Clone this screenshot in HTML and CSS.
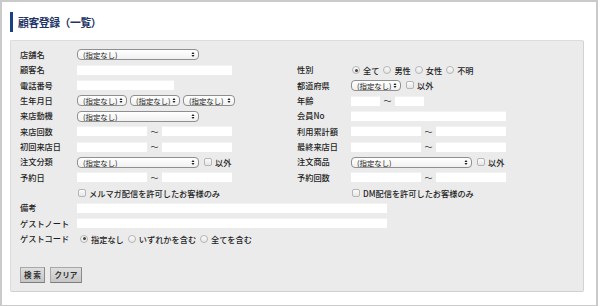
FILE: index.html
```html
<!DOCTYPE html>
<html lang="ja">
<head>
<meta charset="utf-8">
<title>顧客登録（一覧）</title>
<link rel="stylesheet" href="styles.css">
</head>
<body>
<div class="frame">
  <h1 class="title">顧客登録（一覧）</h1>
  <div class="panel">
    <div class="grid">
      <div class="lbl">店舗名</div>
      <div class="fld"><span class="sel w122"><span class="st">(指定なし)</span><svg class="arr" viewBox="0 0 5 8"><path d="M0.6 3.3L2.5 0.8L4.4 3.3Z M0.6 4.7L2.5 7.2L4.4 4.7Z"/></svg></span></div>
      <div class="lbl"></div>
      <div class="fld"></div>

      <div class="lbl">顧客名</div>
      <div class="fld"><span class="inp w155"></span></div>
      <div class="lbl">性別</div>
      <div class="fld"><span class="rad on"></span><span class="opt">全て</span><span class="rad"></span><span class="opt">男性</span><span class="rad"></span><span class="opt">女性</span><span class="rad"></span><span class="opt">不明</span></div>

      <div class="lbl">電話番号</div>
      <div class="fld"><span class="inp w97"></span></div>
      <div class="lbl">都道府県</div>
      <div class="fld"><span class="sel w50"><span class="st">(指定なし)</span><svg class="arr" viewBox="0 0 5 8"><path d="M0.6 3.3L2.5 0.8L4.4 3.3Z M0.6 4.7L2.5 7.2L4.4 4.7Z"/></svg></span><span class="chk"></span><span class="opt">以外</span></div>

      <div class="lbl">生年月日</div>
      <div class="fld"><span class="sel w50 mr3"><span class="st">(指定なし)</span><svg class="arr" viewBox="0 0 5 8"><path d="M0.6 3.3L2.5 0.8L4.4 3.3Z M0.6 4.7L2.5 7.2L4.4 4.7Z"/></svg></span><span class="sel w50 mr3"><span class="st">(指定なし)</span><svg class="arr" viewBox="0 0 5 8"><path d="M0.6 3.3L2.5 0.8L4.4 3.3Z M0.6 4.7L2.5 7.2L4.4 4.7Z"/></svg></span><span class="sel w52"><span class="st">(指定なし)</span><svg class="arr" viewBox="0 0 5 8"><path d="M0.6 3.3L2.5 0.8L4.4 3.3Z M0.6 4.7L2.5 7.2L4.4 4.7Z"/></svg></span></div>
      <div class="lbl">年齢</div>
      <div class="fld"><span class="inp w29"></span><span class="tilde">〜</span><span class="inp w29"></span></div>

      <div class="lbl">来店動機</div>
      <div class="fld"><span class="sel w122"><span class="st">(指定なし)</span><svg class="arr" viewBox="0 0 5 8"><path d="M0.6 3.3L2.5 0.8L4.4 3.3Z M0.6 4.7L2.5 7.2L4.4 4.7Z"/></svg></span></div>
      <div class="lbl">会員No</div>
      <div class="fld"><span class="inp w155"></span></div>

      <div class="lbl">来店回数</div>
      <div class="fld"><span class="inp w70"></span><span class="tilde">〜</span><span class="inp w70"></span></div>
      <div class="lbl">利用累計額</div>
      <div class="fld"><span class="inp w70"></span><span class="tilde">〜</span><span class="inp w70"></span></div>

      <div class="lbl">初回来店日</div>
      <div class="fld"><span class="inp w70"></span><span class="tilde">〜</span><span class="inp w70"></span></div>
      <div class="lbl">最終来店日</div>
      <div class="fld"><span class="inp w70"></span><span class="tilde">〜</span><span class="inp w70"></span></div>

      <div class="lbl">注文分類</div>
      <div class="fld"><span class="sel w122"><span class="st">(指定なし)</span><svg class="arr" viewBox="0 0 5 8"><path d="M0.6 3.3L2.5 0.8L4.4 3.3Z M0.6 4.7L2.5 7.2L4.4 4.7Z"/></svg></span><span class="chk"></span><span class="opt">以外</span></div>
      <div class="lbl">注文商品</div>
      <div class="fld"><span class="sel w121"><span class="st">(指定なし)</span><svg class="arr" viewBox="0 0 5 8"><path d="M0.6 3.3L2.5 0.8L4.4 3.3Z M0.6 4.7L2.5 7.2L4.4 4.7Z"/></svg></span><span class="chk"></span><span class="opt">以外</span></div>

      <div class="lbl">予約日</div>
      <div class="fld"><span class="inp w70"></span><span class="tilde">〜</span><span class="inp w70"></span></div>
      <div class="lbl">予約回数</div>
      <div class="fld"><span class="inp w70"></span><span class="tilde">〜</span><span class="inp w70"></span></div>

      <div class="lbl"></div>
      <div class="fld"><span class="chk first"></span><span class="opt">メルマガ配信を許可したお客様のみ</span></div>
      <div class="lbl"></div>
      <div class="fld"><span class="chk first"></span><span class="opt">DM配信を許可したお客様のみ</span></div>

      <div class="lbl">備考</div>
      <div class="fld span3"><span class="inp w310"></span></div>

      <div class="lbl">ゲストノート</div>
      <div class="fld span3"><span class="inp w310"></span></div>

      <div class="lbl">ゲストコード</div>
      <div class="fld span3"><span class="rad on first"></span><span class="opt">指定なし</span><span class="rad"></span><span class="opt">いずれかを含む</span><span class="rad"></span><span class="opt">全てを含む</span></div>
    </div>
    <div class="buttons">
      <button class="btn w25" type="button">検 索</button>
      <button class="btn w32" type="button">クリア</button>
    </div>
  </div>
</div>
</body>
</html>
```
FILE: styles.css
```css
html, body {
  margin: 0;
  padding: 0;
  background: #ffffff;
}
body {
  font-family: "Noto Sans CJK JP", "Liberation Sans", sans-serif;
  color: #222;
  overflow: hidden;
}
.frame {
  box-sizing: border-box;
  width: 598px;
  height: 310px;
  border: 2px solid #cacaca;
  border-bottom-width: 5px;
  background: #fff;
  padding: 10px 12px 0 8px;
}
.title {
  margin: 0 0 8px 0;
  height: 20px;
  border-left: 3px solid #1c3f86;
  padding-left: 5px;
  font-size: 10.8px;
  line-height: 20px;
  font-weight: 700;
  color: #1f3566;
  letter-spacing: -0.4px;
}
.panel {
  box-sizing: border-box;
  width: 574px;
  height: 252px;
  background: #ebebeb;
  border: 1px solid #dcdcdc;
  border-right-color: #d2d2d2;
  border-bottom-color: #d0d0d0;
  border-radius: 2px;
  padding: 6px 0 0 9px;
}
.grid {
  display: grid;
  grid-template-columns: 57px 220px 54px 1fr;
  grid-auto-rows: 15.35px;
}
.lbl {
  font-size: 8.2px;
  line-height: 15.35px;
  white-space: nowrap;
  color: #1e1e1e;
  font-weight: 500;
}
.fld {
  display: flex;
  align-items: center;
  font-size: 8.2px;
  white-space: nowrap;
}
.span3 { grid-column: 2 / span 3; }
.inp {
  display: block;
  height: 10px;
  background: #fff;
  border-top: 1px solid #f2f2f2;
  box-sizing: border-box;
}
.w29 { width: 29px; }
.w70 { width: 70px; }
.w97 { width: 97px; }
.w155 { width: 155px; }
.w310 { width: 310px; }
.tilde {
  display: block;
  width: 15px;
  text-align: center;
  font-size: 8px;
  color: #333;
}
.sel {
  box-sizing: border-box;
  display: flex;
  align-items: center;
  justify-content: space-between;
  height: 11px;
  border: 1px solid #8f8f8f;
  border-radius: 4px;
  background: linear-gradient(#ffffff, #f1f1f1);
  padding: 0 3px 0 5px;
  font-size: 7.4px;
  color: #222;
  overflow: hidden;
}
.st { line-height: 9px; }
.w50 { width: 50px; }
.w52 { width: 52px; }
.w121 { width: 121px; }
.w122 { width: 122px; }
.mr3 { margin-right: 3px; }
.arr {
  width: 4px;
  height: 7px;
  fill: #222;
  flex: none;
}
.chk {
  box-sizing: border-box;
  display: block;
  width: 8px;
  height: 8px;
  border: 1px solid #b5b5b5;
  border-radius: 2px;
  background: linear-gradient(#fbfbfb, #e6e6e6);
  margin-left: 5px;
  margin-right: 3px;
}
.chk.first { margin-left: 1px; }
.rad {
  box-sizing: border-box;
  display: block;
  width: 8px;
  height: 8px;
  border: 1px solid #b5b5b5;
  border-radius: 50%;
  background: linear-gradient(#fbfbfb, #e6e6e6);
  margin-left: 4px;
  margin-right: 3px;
  position: relative;
}
.rad:first-child { margin-left: 1px; }
.rad.first { margin-left: 3px; }
.rad.on::after {
  content: "";
  position: absolute;
  left: 1.5px;
  top: 1.5px;
  width: 3px;
  height: 3px;
  border-radius: 50%;
  background: #444;
}
.opt {
  font-size: 8.2px;
  color: #1e1e1e;
  font-weight: 500;
}
.buttons {
  display: flex;
  gap: 5px;
  margin-top: 21px;
}
.btn {
  box-sizing: border-box;
  height: 16px;
  padding: 0;
  background: linear-gradient(#dedede, #c6c6c6);
  border: 1px solid #a8a8a8;
  border-right-color: #8a8a8a;
  border-bottom-color: #7d7d7d;
  border-radius: 0;
  font-family: "Noto Sans CJK JP", sans-serif;
  font-size: 7.6px;
  font-weight: 700;
  color: #333;
  line-height: 14px;
}
.w25 { width: 25px; }
.w32 { width: 32px; }
```
